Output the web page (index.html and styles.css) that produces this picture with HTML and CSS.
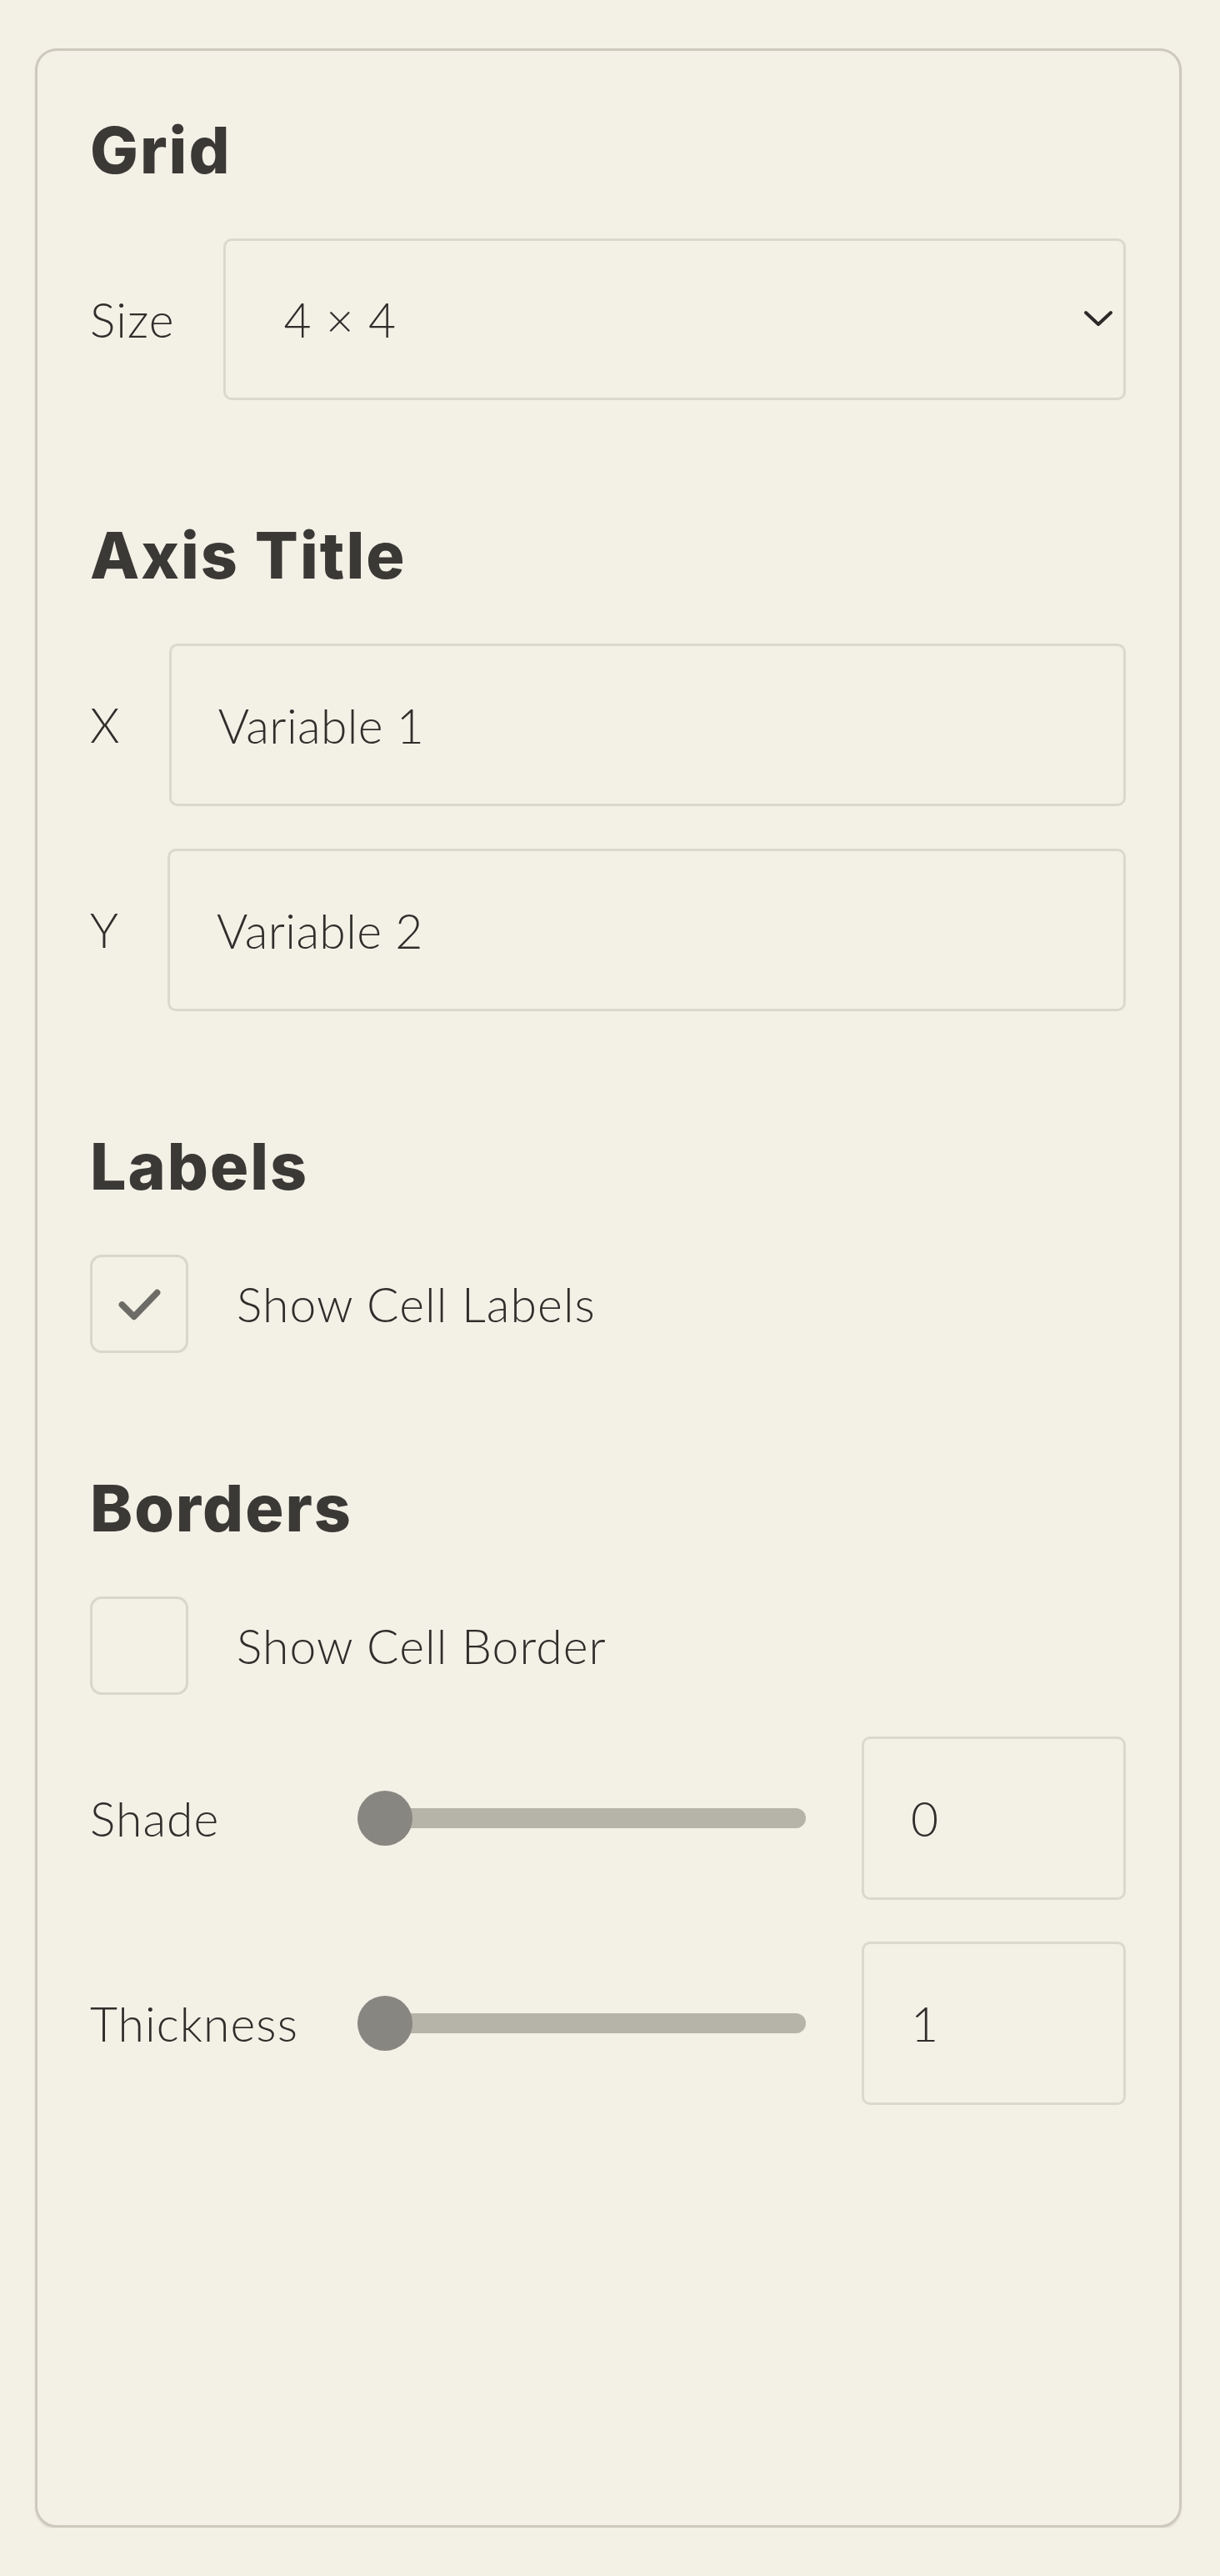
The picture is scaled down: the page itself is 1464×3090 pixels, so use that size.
FILE: index.html
```html
<!DOCTYPE html>
<html lang="en">
<head>
<meta charset="utf-8">
<title>Grid settings</title>
<link rel="stylesheet" href="styles.css">
</head>
<body>
<div class="panel">
  <section class="section">
    <h2 class="heading">Grid</h2>
    <div class="row">
      <span class="label">Size</span>
      <div class="select-wrap">
        <select class="select">
          <option>4 × 4</option>
        </select>
        <svg class="chevron" width="36" height="20" viewBox="0 0 36 20" aria-hidden="true">
          <path d="M3 3 L18 17 L33 3" fill="none" stroke="#2b2a28" stroke-width="4" stroke-linecap="round" stroke-linejoin="round"/>
        </svg>
      </div>
    </div>
  </section>

  <section class="section">
    <h2 class="heading">Axis Title</h2>
    <div class="rows">
      <div class="row">
        <span class="label">X</span>
        <input class="text-input" type="text" value="Variable 1">
      </div>
      <div class="row">
        <span class="label">Y</span>
        <input class="text-input" type="text" value="Variable 2">
      </div>
    </div>
  </section>

  <section class="section">
    <h2 class="heading">Labels</h2>
    <label class="check-row">
      <span class="box">
        <svg width="117" height="117" viewBox="0 0 117 117" aria-hidden="true">
          <path d="M37 59 L52 74 L81 44" fill="none" stroke="#6c6b66" stroke-width="8" stroke-linecap="round" stroke-linejoin="round"/>
        </svg>
      </span>
      <span class="check-text">Show Cell Labels</span>
    </label>
  </section>

  <section class="section">
    <h2 class="heading">Borders</h2>
    <div class="rows tight">
      <label class="check-row">
        <span class="box"></span>
        <span class="check-text">Show Cell Border</span>
      </label>
      <div class="slider-row">
        <span class="label">Shade</span>
        <input class="range" type="range" min="0" max="100" value="0">
        <input class="num-input" type="text" value="0">
      </div>
      <div class="slider-row">
        <span class="label">Thickness</span>
        <input class="range" type="range" min="1" max="10" value="1">
        <input class="num-input" type="text" value="1">
      </div>
    </div>
  </section>
</div>
</body>
</html>
```

FILE: styles.css
```css
html, body {
  margin: 0;
  padding: 0;
  background: #f3f0e6;
}

body {
  font-family: "Lato", "Open Sans", sans-serif;
  font-weight: 300;
  color: #2f2e2b;
  padding: 58px 0 0 42px;
}

.panel {
  box-sizing: border-box;
  width: 1376px;
  height: 2974px;
  border: 3px solid #cdcabd;
  border-radius: 26px;
  background: #f3f0e6;
  box-shadow: 0 2px 2px rgba(80, 76, 60, 0.12);
  padding: 72px 64px 0 63px;
}

.section + .section {
  margin-top: 139px;
}

.heading {
  margin: 0 0 59px 0;
  font-family: "Inter", "Open Sans", sans-serif;
  font-weight: 800;
  font-size: 77px;
  line-height: 94px;
  color: #3a3936;
  letter-spacing: 2px;
}

.rows {
  display: flex;
  flex-direction: column;
  gap: 51px;
}

.rows.tight {
  gap: 50px;
}

.row {
  display: flex;
  align-items: center;
  gap: 58px;
}

.label,
.check-text,
.select,
.text-input,
.num-input {
  font-size: 57px;
  letter-spacing: 1.1px;
}

.text-input {
  letter-spacing: 0.4px;
}

.label {
  line-height: 1;
  white-space: nowrap;
}

.select-wrap {
  position: relative;
  flex: 1;
}

.select {
  -webkit-appearance: none;
  appearance: none;
  box-sizing: border-box;
  width: 100%;
  height: 194px;
  border: 3px solid #dbd8cc;
  border-radius: 10px;
  background: transparent;
  font-family: inherit;
  font-weight: 300;
  color: #2f2e2b;
  padding: 0 80px 0 70px;
  outline: none;
}

.chevron {
  position: absolute;
  right: 15px;
  top: 50%;
  margin-top: -11px;
  pointer-events: none;
}

.text-input,
.num-input {
  box-sizing: border-box;
  height: 195px;
  border: 3px solid #dbd8cc;
  border-radius: 10px;
  background: transparent;
  font-family: inherit;
  font-weight: 300;
  color: #2f2e2b;
  padding: 0 0 0 56px;
  outline: none;
  margin: 0;
}

.text-input {
  flex: 1;
  min-width: 0;
}

.check-row {
  display: flex;
  align-items: center;
  gap: 58px;
}

.box {
  box-sizing: border-box;
  width: 118px;
  height: 118px;
  border: 3px solid #d9d6ca;
  border-radius: 14px;
  display: flex;
  align-items: center;
  justify-content: center;
  flex: none;
}

.box svg {
  display: block;
}

.check-text {
  line-height: 1;
}

.slider-row {
  display: grid;
  grid-template-columns: 254px 1fr 317px;
  column-gap: 67px;
  align-items: center;
}

.num-input {
  width: 317px;
  height: 196px;
}

.range {
  -webkit-appearance: none;
  appearance: none;
  width: 100%;
  height: 66px;
  margin: 0;
  background: transparent;
  outline: none;
}

.range::-webkit-slider-runnable-track {
  height: 24px;
  border-radius: 12px;
  background: #b6b3a8;
}

.range::-webkit-slider-thumb {
  -webkit-appearance: none;
  appearance: none;
  width: 66px;
  height: 66px;
  border-radius: 50%;
  background: #878680;
  border: none;
  margin-top: -21px;
}
```
